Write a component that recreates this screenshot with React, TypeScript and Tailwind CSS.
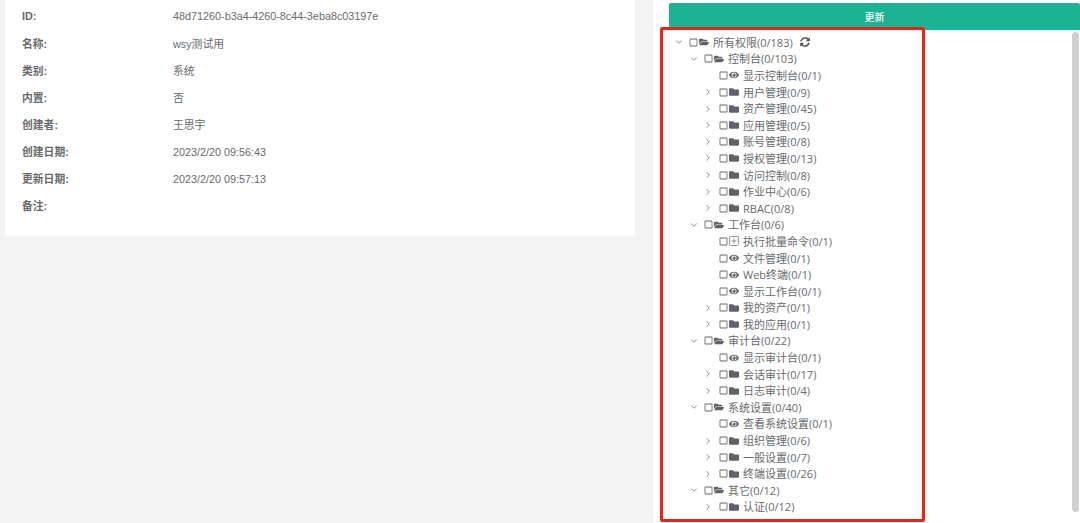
import React from 'react';
import { FaEye, FaFolder, FaFolderOpen, FaRegSquare, FaSyncAlt } from 'react-icons/fa';
import { LuChevronDown, LuChevronRight } from 'react-icons/lu';

const details = [
  ['ID:', '48d71260-b3a4-4260-8c44-3eba8c03197e'],
  ['名称:', 'wsy测试用'],
  ['类别:', '系统'],
  ['内置:', '否'],
  ['创建者:', '王思宇'],
  ['创建日期:', '2023/2/20 09:56:43'],
  ['更新日期:', '2023/2/20 09:57:13'],
  ['备注:', ''],
];

type Kind = 'open' | 'folder' | 'eye' | 'cmd';
type Row = { level: number; kind: Kind; label: string; refresh?: boolean };

const rows: Row[] = [
  { level: 0, kind: 'open', label: '所有权限(0/183)', refresh: true },
  { level: 1, kind: 'open', label: '控制台(0/103)' },
  { level: 2, kind: 'eye', label: '显示控制台(0/1)' },
  { level: 2, kind: 'folder', label: '用户管理(0/9)' },
  { level: 2, kind: 'folder', label: '资产管理(0/45)' },
  { level: 2, kind: 'folder', label: '应用管理(0/5)' },
  { level: 2, kind: 'folder', label: '账号管理(0/8)' },
  { level: 2, kind: 'folder', label: '授权管理(0/13)' },
  { level: 2, kind: 'folder', label: '访问控制(0/8)' },
  { level: 2, kind: 'folder', label: '作业中心(0/6)' },
  { level: 2, kind: 'folder', label: 'RBAC(0/8)' },
  { level: 1, kind: 'open', label: '工作台(0/6)' },
  { level: 2, kind: 'cmd', label: '执行批量命令(0/1)' },
  { level: 2, kind: 'eye', label: '文件管理(0/1)' },
  { level: 2, kind: 'eye', label: 'Web终端(0/1)' },
  { level: 2, kind: 'eye', label: '显示工作台(0/1)' },
  { level: 2, kind: 'folder', label: '我的资产(0/1)' },
  { level: 2, kind: 'folder', label: '我的应用(0/1)' },
  { level: 1, kind: 'open', label: '审计台(0/22)' },
  { level: 2, kind: 'eye', label: '显示审计台(0/1)' },
  { level: 2, kind: 'folder', label: '会话审计(0/17)' },
  { level: 2, kind: 'folder', label: '日志审计(0/4)' },
  { level: 1, kind: 'open', label: '系统设置(0/40)' },
  { level: 2, kind: 'eye', label: '查看系统设置(0/1)' },
  { level: 2, kind: 'folder', label: '组织管理(0/6)' },
  { level: 2, kind: 'folder', label: '一般设置(0/7)' },
  { level: 2, kind: 'folder', label: '终端设置(0/26)' },
  { level: 1, kind: 'open', label: '其它(0/12)' },
  { level: 2, kind: 'folder', label: '认证(0/12)' },
];

const indent: Record<number, string> = { 0: 'pl-0', 1: 'pl-[15px]', 2: 'pl-[30px]' };

function CmdIcon() {
  return (
    <svg width="10" height="10" viewBox="0 0 10 10" fill="none" stroke="#888" strokeWidth="0.9">
      <rect x="0.5" y="0.5" width="9" height="9" rx="1" />
      <path d="M2.5 5h5M5 2.5v5" />
    </svg>
  );
}

function TreeRow({ row }: { row: Row }) {
  return (
    <div className={`flex h-[16.6px] items-center ${indent[row.level]}`}>
      <span className="flex w-[14px] shrink-0 items-center text-[#777]">
        {row.kind === 'open' && <LuChevronDown size={10} />}
        {row.kind === 'folder' && <LuChevronRight size={10} className="-ml-[1px]" />}
      </span>
      <FaRegSquare size={9} className="ml-[0.5px] shrink-0 text-[#666]" />
      <span className="ml-[1.5px] flex w-[12px] shrink-0 items-center text-[#5f6368]">
        {row.kind === 'open' && <FaFolderOpen size={10} />}
        {row.kind === 'folder' && <FaFolder size={10} />}
        {row.kind === 'eye' && <FaEye size={10} />}
        {row.kind === 'cmd' && <CmdIcon />}
      </span>
      <span className="ml-[2px] whitespace-nowrap">{row.label}</span>
      {row.refresh && <FaSyncAlt size={10} className="ml-[7px] text-[#555]" />}
    </div>
  );
}

export default function App() {
  return (
    <div className="flex h-[523px] w-[1080px] overflow-hidden bg-[#f3f3f3] font-['Open_Sans','Noto_Sans_CJK_SC',sans-serif] text-[#676a6c]">
      <div className="ml-[5px] h-[236px] w-[630px] rounded-b-[3px] bg-white pt-[3px] font-['Liberation_Sans','Noto_Sans_CJK_SC',sans-serif] text-[10.8px]">
        {details.map(([label, value]) => (
          <div key={label} className="flex h-[27.1px] items-center">
            <span className="w-[168px] pl-[17px] font-semibold">{label}</span>
            <span>{value}</span>
          </div>
        ))}
      </div>

      <div className="relative ml-[18px] h-full flex-1 bg-white pl-[16px] pt-[3px]">
        <button className="block h-[27px] w-full rounded-t-[2px] bg-[#1ab394] pt-[1px] text-[10px] font-medium text-white">更新</button>
        <div className="pl-[5px] pt-[4px] text-[11px] leading-none">
          {rows.map(row => (
            <TreeRow key={row.label} row={row} />
          ))}
        </div>
        <div className="absolute right-[1px] top-[32px] h-[480px] w-[7px] rounded-full bg-[#cfcfcf]" />
        <div className="absolute left-[7px] top-[27px] h-[495px] w-[265px] rounded-[2px] border-[3px] border-[#fb1c15]" />
      </div>
    </div>
  );
}
